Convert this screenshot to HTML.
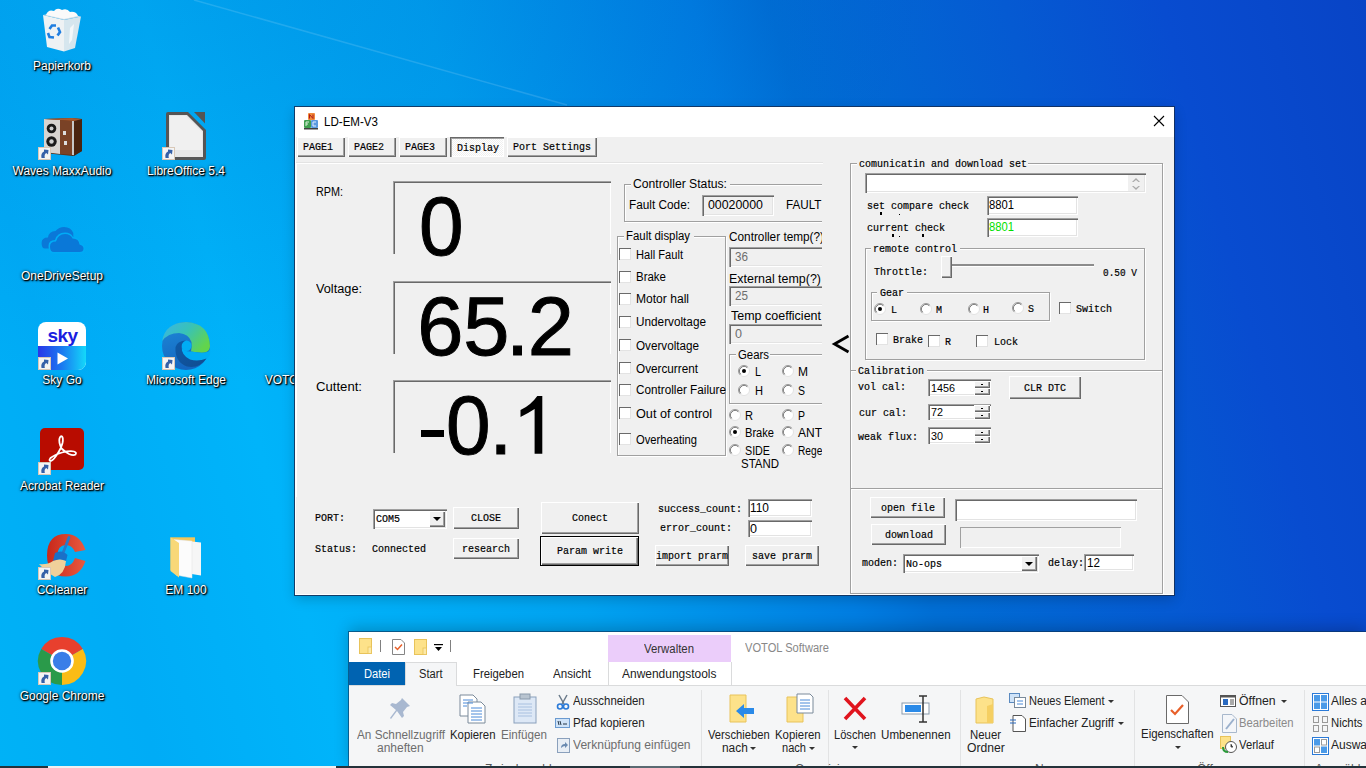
<!DOCTYPE html>
<html><head><meta charset="utf-8"><title>LD-EM-V3</title>
<style>
html,body{margin:0;padding:0;width:1366px;height:768px;overflow:hidden;background:#0a8ae0;}
.a{position:absolute;box-sizing:border-box;}
svg.a{overflow:visible;}
.t{position:absolute;white-space:pre;}
.dl{position:absolute;text-align:center;font-family:"Liberation Sans",sans-serif;font-size:12px;line-height:12px;color:#fff;text-shadow:1px 1px 1px #000,1px 1px 2px #000,0 0 3px rgba(0,0,0,0.7);white-space:pre;}
</style></head><body>
<div class="a" style="left:0px;top:0px;width:1366px;height:768px;background:radial-gradient(ellipse 750px 430px at 200px -40px, rgba(0,30,150,0.12), rgba(0,30,150,0)), linear-gradient(75deg, rgb(0,178,246) 0%, rgb(0,172,246) 10%, rgb(0,180,250) 22%, rgb(0,162,240) 40%, rgb(0,125,225) 57%, rgb(0,110,212) 62%, rgb(5,90,210) 77%, rgb(8,76,208) 87%, rgb(8,68,198) 100%);"></div>
<svg class="a" style="left:0;top:0" width="1366" height="768"><line x1="194" y1="0" x2="567" y2="105" stroke="rgba(255,255,255,0.13)" stroke-width="1.5"/></svg>
<svg class="a" style="left:40px;top:6px" width="44" height="48" viewBox="40 6 44 48"><path d="M43 15 L64 20 L64 51.5 L47 47Z" fill="#eef2f4"/><path d="M64 20 L81 16.5 L75 48 L64 51.5Z" fill="#d6e6ee"/><path d="M43 15 L64 20 L81 16.5 L60 12Z" fill="#c8dce8"/><path d="M46 15 Q48 9 54 11 Q57 7 62 10 Q67 8 70 12 Q76 11 78 16 L64 19Z" fill="#fafafa"/><path d="M70 28 L74 24 L72 40 L69 44Z" fill="#f4f8fa"/><path d="M49.5 29 L52 25.5 L56 25.5 M58 27.5 L60 32 L57.5 35.5 M54 37.5 L49.5 37 L48 33" fill="none" stroke="#1f7ee0" stroke-width="2.6"/></svg>
<div class="t dl" style="left:2px;width:120px;top:59.84px;">Papierkorb</div>
<svg class="a" style="left:43px;top:117px" width="40" height="40" viewBox="43 117 40 40"><path d="M44 119 L72 118 L82 119 L82 151 L73 156 L44 153Z" fill="#5a2e14"/><path d="M74 121 L82 119 L82 151 L74 156Z" fill="#4a2410"/><path d="M44 119 L60 120 L60 154 L44 152Z" fill="#d8d4d0"/><path d="M60 120 L72 121 L72 155 L60 154Z" fill="#7a4226"/><rect x="72" y="121" width="2" height="34" fill="#c8c8c8"/><circle cx="51.5" cy="128.5" r="4.8" fill="#1a1a1a"/><circle cx="51.5" cy="141.5" r="5.2" fill="#1a1a1a"/><circle cx="51.5" cy="128.5" r="2" fill="#cfcfcf"/><circle cx="51.5" cy="141.5" r="2.2" fill="#cfcfcf"/><rect x="63" y="131" width="3" height="4" fill="#ddd"/><rect x="64" y="141" width="3" height="4" fill="#ddd"/><path d="M44 119 L72 118 L82 119 L74 121 L60 120Z" fill="#a85a30"/></svg>
<svg class="a" style="left:38px;top:147px" width="13" height="13" viewBox="0 0 13 13"><rect x="0.5" y="0.5" width="12" height="12" fill="#f4f4f4" stroke="#d8c8b8"/><path d="M3.5 11 Q2.5 6 6 4.5 L6 2.5 L10.5 3 L10 7.5 L8.3 6 Q6 7 6.8 11Z" fill="#3560a8"/></svg>
<div class="t dl" style="left:2px;width:120px;top:164.84px;">Waves MaxxAudio</div>
<svg class="a" style="left:165px;top:111px" width="42" height="50" viewBox="165 111 42 50"><path d="M166 114 Q166 112 168 112 L188 112 L206 130 L206 158 Q206 160 204 160 L168 160 Q166 160 166 158Z" fill="#555"/><path d="M169 115 L187 115 L203 131 L203 157 L169 157Z" fill="#e6e6e6"/><path d="M170 116 L186 116 L202 132 L202 150 L170 150Z" fill="#f0f0f0"/><path d="M194 112 L205 112 L205 123.5Z" fill="#555"/></svg>
<svg class="a" style="left:162px;top:147px" width="13" height="13" viewBox="0 0 13 13"><rect x="0.5" y="0.5" width="12" height="12" fill="#f4f4f4" stroke="#d8c8b8"/><path d="M3.5 11 Q2.5 6 6 4.5 L6 2.5 L10.5 3 L10 7.5 L8.3 6 Q6 7 6.8 11Z" fill="#3560a8"/></svg>
<div class="t dl" style="left:126px;width:120px;top:164.84px;">LibreOffice 5.4</div>
<svg class="a" style="left:40px;top:225px" width="46" height="29" viewBox="40 225 46 29"><path d="M45 248.6 Q41.6 248.6 41.6 243 Q41.6 237.5 48 237.5 Q49 231 55.5 231 Q59 227 64 227 Q71 227 73.3 233 L73.3 248.6Z" fill="#0a78d8"/><path d="M53 253.5 Q48.5 253.5 48.5 246 Q48.5 240 55 240 Q57 232.5 65 232.5 Q71 232.5 73 237 Q79.5 237 80.5 243 Q85 244 85 248.5 Q85 253.5 80 253.5Z" fill="#00acf6"/><path d="M54 252 Q50 252 50 246.5 Q50 241.5 56 241.5 Q58 234 65 234 Q70.5 234 72.5 238.5 Q79 238.5 79.5 244.5 Q83.5 245.5 83.5 248.5 Q83.5 252 79.5 252Z" fill="#0a78d8"/></svg>
<div class="t dl" style="left:2px;width:120px;top:269.84px;">OneDriveSetup</div>
<svg class="a" style="left:38px;top:322px" width="48" height="48" viewBox="0 0 48 48"><defs><linearGradient id="sk" x1="0" x2="1" y1="0" y2="0"><stop offset="0" stop-color="#2a36e8"/><stop offset="0.5" stop-color="#1a7af0"/><stop offset="1" stop-color="#14d8fa"/></linearGradient><clipPath id="skc"><rect x="0" y="0" width="48" height="48" rx="8"/></clipPath></defs><g clip-path="url(#skc)"><rect width="48" height="48" fill="#fff"/><rect y="24" width="48" height="24" fill="url(#sk)"/></g><text x="24.5" y="19.5" text-anchor="middle" font-family="Liberation Sans" font-weight="700" font-size="19" letter-spacing="-0.5" fill="#1a1ee0">sky</text><path d="M19.5 30.5 L30 36.5 L19.5 42.5Z" fill="#fff"/></svg>
<svg class="a" style="left:38px;top:357px" width="13" height="13" viewBox="0 0 13 13"><rect x="0.5" y="0.5" width="12" height="12" fill="#f4f4f4" stroke="#d8c8b8"/><path d="M3.5 11 Q2.5 6 6 4.5 L6 2.5 L10.5 3 L10 7.5 L8.3 6 Q6 7 6.8 11Z" fill="#3560a8"/></svg>
<div class="t dl" style="left:2px;width:120px;top:373.84px;">Sky Go</div>
<svg class="a" style="left:162px;top:322px" width="48" height="48" viewBox="0 0 48 48"><defs><linearGradient id="eg" x1="0" x2="1" y1="0" y2="0.6"><stop offset="0" stop-color="#3ab4e8"/><stop offset="0.5" stop-color="#38c2b8"/><stop offset="1" stop-color="#62d44c"/></linearGradient><linearGradient id="el" x1="0" x2="0.3" y1="0" y2="1"><stop offset="0" stop-color="#1e8ad8"/><stop offset="1" stop-color="#1466c0"/></linearGradient><linearGradient id="eb" x1="0" x2="1" y1="0" y2="1"><stop offset="0" stop-color="#0e5aa8"/><stop offset="1" stop-color="#114c90"/></linearGradient></defs><circle cx="24" cy="24" r="24" fill="url(#el)"/><path d="M0.2 19 Q3 1 24 0 Q47 1 48 24 Q48 29 43 30.5 Q36 31 29 29.5 Q30 25 29.5 20 Q27 12 17 11 Q6 11 0.2 19Z" fill="url(#eg)"/><ellipse cx="24.5" cy="23.8" rx="5" ry="5.2" fill="#00adf5"/><path d="M20 26 Q23 30 29 29.5 Q37 31 43 30.5 Q47 30 48.2 27 L48.2 32 Q46.5 36 44.5 37 Q36 41 28 38 Q21 35 20 29Z" fill="#00adf5"/><path d="M13.5 25 Q12.5 40 25 44.5 Q37 47 44.5 36.5 Q36 40 28 37.5 Q19.5 33.5 19.5 25 Q19.5 20 24 18.5 Q15.5 18.5 13.5 25Z" fill="url(#eb)"/></svg>
<svg class="a" style="left:162px;top:357px" width="13" height="13" viewBox="0 0 13 13"><rect x="0.5" y="0.5" width="12" height="12" fill="#f4f4f4" stroke="#d8c8b8"/><path d="M3.5 11 Q2.5 6 6 4.5 L6 2.5 L10.5 3 L10 7.5 L8.3 6 Q6 7 6.8 11Z" fill="#3560a8"/></svg>
<div class="t dl" style="left:126px;width:120px;top:373.84px;">Microsoft Edge</div>
<div class="t dl" style="left:250px;width:120px;top:373.84px;">VOTOL Software</div>
<svg class="a" style="left:40px;top:428px" width="44" height="42" viewBox="40 428 44 42"><rect x="40" y="428" width="44" height="42" rx="5" fill="#b80c00"/><path d="M61.5 448.5 Q58.5 442 59.5 438.5 Q60.5 435.5 62 436.5 Q63.5 438 62.5 443 Q61 449 56 456 Q52.5 461 50.5 461 Q48.5 460.5 50.5 458 Q54 455 62 452.5 Q70 450.5 74 451.5 Q77 452.5 75.5 454.5 Q73.5 456 69 454 Q65 452 61.5 448.5Z" fill="none" stroke="#fff" stroke-width="1.8"/></svg>
<svg class="a" style="left:38px;top:462px" width="13" height="13" viewBox="0 0 13 13"><rect x="0.5" y="0.5" width="12" height="12" fill="#f4f4f4" stroke="#d8c8b8"/><path d="M3.5 11 Q2.5 6 6 4.5 L6 2.5 L10.5 3 L10 7.5 L8.3 6 Q6 7 6.8 11Z" fill="#3560a8"/></svg>
<div class="t dl" style="left:2px;width:120px;top:479.84px;">Acrobat Reader</div>
<svg class="a" style="left:38px;top:533px" width="49" height="45" viewBox="38 533 49 45"><defs><linearGradient id="cc" x1="0" x2="1"><stop offset="0" stop-color="#c8281a"/><stop offset="1" stop-color="#e85a40"/></linearGradient></defs><path d="M85.5 550 Q80 534 66 534 Q47 534 47 555.5 Q47 576.5 66 576.5 Q80 576.5 85.5 561 L75 558 Q72 566 66 566 Q57.5 566 57.5 555.5 Q57.5 545 66 545 Q72 545 75 552Z" fill="url(#cc)"/><path d="M69 537.5 L63 553" stroke="#2a78c8" stroke-width="2.8" stroke-linecap="round"/><path d="M55 553 Q62 549 67.5 555 L66 561 Q60 558 53 561Z" fill="#1a70c8"/><path d="M53 561 Q60 558 66 561 Q65 574 55 577 Q46 572 39 564 Q47 565 53 561Z" fill="#f0d09a"/></svg>
<svg class="a" style="left:38px;top:567px" width="13" height="13" viewBox="0 0 13 13"><rect x="0.5" y="0.5" width="12" height="12" fill="#f4f4f4" stroke="#d8c8b8"/><path d="M3.5 11 Q2.5 6 6 4.5 L6 2.5 L10.5 3 L10 7.5 L8.3 6 Q6 7 6.8 11Z" fill="#3560a8"/></svg>
<div class="t dl" style="left:2px;width:120px;top:583.84px;">CCleaner</div>
<svg class="a" style="left:169px;top:536px" width="34" height="44" viewBox="169 536 34 44"><path d="M170.5 537.3 L195 537.3 L195 570 L170.5 570Z" fill="#f2c65a"/><path d="M178 540 L201 542.5 L201 575.5 L179 572Z" fill="#f6f6f6"/><path d="M174 539.5 L192 541 L192 578 L176 575Z" fill="#fcfcfc" stroke="#e0e0e0" stroke-width="0.5"/><path d="M170.5 537.3 L179 543 L179 577.6 L170.5 571Z" fill="#f8d878"/></svg>
<div class="t dl" style="left:126px;width:120px;top:583.84px;">EM 100</div>
<svg class="a" style="left:38px;top:637px" width="48" height="48" viewBox="-24 -24 48 48"><path d="M0 0 L-20.8 -12 A24 24 0 0 1 20.8 -12Z" fill="#e8402e"/><path d="M0 0 L20.8 -12 A24 24 0 0 1 0 24Z" fill="#fbbc16"/><path d="M0 0 L0 24 A24 24 0 0 1 -20.8 -12Z" fill="#2a9a4a"/><circle r="11.8" fill="#fff"/><circle r="9.2" fill="#3a7ee8"/></svg>
<svg class="a" style="left:38px;top:672px" width="13" height="13" viewBox="0 0 13 13"><rect x="0.5" y="0.5" width="12" height="12" fill="#f4f4f4" stroke="#d8c8b8"/><path d="M3.5 11 Q2.5 6 6 4.5 L6 2.5 L10.5 3 L10 7.5 L8.3 6 Q6 7 6.8 11Z" fill="#3560a8"/></svg>
<div class="t dl" style="left:2px;width:120px;top:689.84px;">Google Chrome</div>
<div class="a" style="left:295px;top:107px;width:879px;height:488px;background:#f0f0f0;border:0;box-shadow:0 0 0 1px rgba(20,45,85,0.85), 0 4px 12px rgba(0,0,0,0.2);"></div>
<div class="a" style="left:295px;top:107px;width:879px;height:30px;background:#fff;"></div>
<div class="a" style="left:295px;top:137px;width:1px;height:458px;background:#fff;"></div>
<div class="a" style="left:295px;top:594px;width:879px;height:1px;background:#fff;"></div>
<svg class="a" style="left:302px;top:112px" width="18" height="18" viewBox="0 0 18 18"><rect x="6" y="1" width="7" height="7" rx="1" fill="#f08a3a"/><path d="M7.5 6.5 V2.5 L11 6.5 V2.5" stroke="#b01818" stroke-width="1" fill="none"/><rect x="2" y="8" width="7" height="8" rx="1" fill="#40a050"/><rect x="9" y="8" width="7" height="8" rx="1" fill="#5a9ae0"/><path d="M4 14 V10 H7 M4 12 H6" stroke="#d8f0d8" stroke-width="1" fill="none"/><path d="M14 10 H11 V14 H14" stroke="#e0ecff" stroke-width="1" fill="none"/><rect x="2" y="16" width="14" height="1.5" fill="#404040"/></svg>
<div class="t" style="left:324px;top:115.84px;font-size:12px;line-height:12px;font-family:'Liberation Sans', sans-serif;color:#000;transform:scaleX(0.9640);transform-origin:0 0;">LD-EM-V3</div>
<svg class="a" style="left:1153px;top:115px" width="12" height="12"><path d="M1 1 L11 11 M11 1 L1 11" stroke="#000" stroke-width="1.1"/></svg>
<div class="a" style="left:297px;top:137px;width:48px;height:20px;background:#f0f0f0;box-shadow:inset 1px 1px #fff,inset -1px -1px #696969,inset -2px -2px #a0a0a0;"></div>
<div class="t" style="left:302.5px;top:141.57px;font-size:11px;line-height:11px;font-family:'Liberation Mono', monospace;color:#000;transform:scaleX(0.9087);transform-origin:0 0;-webkit-text-stroke:0.2px #000;">PAGE1</div>
<div class="a" style="left:348px;top:137px;width:48px;height:20px;background:#f0f0f0;box-shadow:inset 1px 1px #fff,inset -1px -1px #696969,inset -2px -2px #a0a0a0;"></div>
<div class="t" style="left:353.5px;top:141.57px;font-size:11px;line-height:11px;font-family:'Liberation Mono', monospace;color:#000;transform:scaleX(0.9087);transform-origin:0 0;-webkit-text-stroke:0.2px #000;">PAGE2</div>
<div class="a" style="left:399px;top:137px;width:48px;height:20px;background:#f0f0f0;box-shadow:inset 1px 1px #fff,inset -1px -1px #696969,inset -2px -2px #a0a0a0;"></div>
<div class="t" style="left:404.5px;top:141.57px;font-size:11px;line-height:11px;font-family:'Liberation Mono', monospace;color:#000;transform:scaleX(0.9087);transform-origin:0 0;-webkit-text-stroke:0.2px #000;">PAGE3</div>
<div class="a" style="left:450px;top:137px;width:54px;height:20px;background:repeating-conic-gradient(#f0f0f0 0 25%,#fff 0 50%) 0 0/2px 2px;box-shadow:inset 1px 1px #696969,inset 2px 2px #a0a0a0,inset -1px -1px #fff;"></div>
<div class="t" style="left:457.3px;top:142.57px;font-size:11px;line-height:11px;font-family:'Liberation Mono', monospace;color:#000;transform:scaleX(0.9087);transform-origin:0 0;-webkit-text-stroke:0.2px #000;">Display</div>
<div class="a" style="left:507px;top:137px;width:90px;height:20px;background:#f0f0f0;box-shadow:inset 1px 1px #fff,inset -1px -1px #696969,inset -2px -2px #a0a0a0;"></div>
<div class="t" style="left:512.6px;top:141.57px;font-size:11px;line-height:11px;font-family:'Liberation Mono', monospace;color:#000;transform:scaleX(0.9088);transform-origin:0 0;-webkit-text-stroke:0.2px #000;">Port Settings</div>
<div class="a" style="left:296px;top:162px;width:527px;height:1px;background:#e3e3e3;"></div>
<div class="a" style="left:296px;top:163px;width:527px;height:1px;background:#fff;"></div>
<div class="a" style="left:296px;top:163px;width:1px;height:334px;background:#fff;"></div>
<div class="t" style="left:316px;top:185.84px;font-size:12px;line-height:12px;font-family:'Liberation Sans', sans-serif;color:#000;transform:scaleX(0.9000);transform-origin:0 0;">RPM:</div>
<div class="t" style="left:316px;top:282.84px;font-size:12px;line-height:12px;font-family:'Liberation Sans', sans-serif;color:#000;transform:scaleX(1.0605);transform-origin:0 0;">Voltage:</div>
<div class="t" style="left:316px;top:380.84px;font-size:12px;line-height:12px;font-family:'Liberation Sans', sans-serif;color:#000;transform:scaleX(1.0944);transform-origin:0 0;">Cuttent:</div>
<div class="a" style="left:393px;top:181px;width:218px;height:73px;box-shadow:inset 1px 1px #a0a0a0,inset 2px 2px #696969,inset -1px 0 #fff;"></div>
<div class="a" style="left:393px;top:281px;width:218px;height:73px;box-shadow:inset 1px 1px #a0a0a0,inset 2px 2px #696969,inset -1px 0 #fff;"></div>
<div class="a" style="left:393px;top:380px;width:218px;height:73px;box-shadow:inset 1px 1px #a0a0a0,inset 2px 2px #696969,inset -1px 0 #fff;"></div>
<div class="t" style="left:419.2px;top:184.72px;font-size:83px;line-height:83px;font-family:'Liberation Sans', sans-serif;color:#000;transform:scaleX(0.965);transform-origin:0 0;-webkit-text-stroke:1px #000;">0</div>
<div class="t" style="left:417.3px;top:284.72px;font-size:83px;line-height:83px;font-family:'Liberation Sans', sans-serif;color:#000;-webkit-text-stroke:1px #000;">6</div>
<div class="t" style="left:463.2px;top:284.72px;font-size:83px;line-height:83px;font-family:'Liberation Sans', sans-serif;color:#000;-webkit-text-stroke:1px #000;">5</div>
<div class="t" style="left:505.9px;top:284.72px;font-size:83px;line-height:83px;font-family:'Liberation Sans', sans-serif;color:#000;-webkit-text-stroke:1px #000;">.</div>
<div class="t" style="left:527.8px;top:284.72px;font-size:83px;line-height:83px;font-family:'Liberation Sans', sans-serif;color:#000;-webkit-text-stroke:1px #000;">2</div>
<div class="a" style="left:421px;top:430px;width:23px;height:7px;background:#000;"></div>
<div class="t" style="left:446.1px;top:383.52px;font-size:83px;line-height:83px;font-family:'Liberation Sans', sans-serif;color:#000;transform:scaleX(0.965);transform-origin:0 0;-webkit-text-stroke:1px #000;">0</div>
<div class="t" style="left:489.2px;top:383.52px;font-size:83px;line-height:83px;font-family:'Liberation Sans', sans-serif;color:#000;-webkit-text-stroke:1px #000;">.</div>
<svg class="a" style="left:0;top:0" width="600" height="460"><path d="M534.6 453.8 V409.1 Q528 413.5 520.5 416.9 V410 Q531 405 537.3 395.9 H542.3 V453.8 Z" fill="#000"/></svg>
<div class="a" style="left:0;top:0;width:822px;height:768px;overflow:hidden">
<div class="a" style="left:624px;top:184px;width:277px;height:38px;border:1px solid #a0a0a0;box-shadow:inset 1px 1px #fff,1px 1px #fff;"></div>
<div class="a" style="left:631px;top:183px;width:99px;height:3px;background:#f0f0f0"></div>
<div class="a" style="left:617px;top:236px;width:109px;height:220px;border:1px solid #a0a0a0;box-shadow:inset 1px 1px #fff,1px 1px #fff;"></div>
<div class="a" style="left:624px;top:235px;width:70px;height:3px;background:#f0f0f0"></div>
<div class="a" style="left:729px;top:354px;width:172px;height:50px;border:1px solid #a0a0a0;box-shadow:inset 1px 1px #fff,1px 1px #fff;"></div>
<div class="a" style="left:736px;top:353px;width:34px;height:3px;background:#f0f0f0"></div>
</div>
<div class="a" style="left:0;top:0;width:822px;height:768px;overflow:hidden">
<div class="t" style="left:633px;top:177.84px;font-size:12px;line-height:12px;font-family:'Liberation Sans', sans-serif;color:#000;transform:scaleX(1.0138);transform-origin:0 0;">Controller Status:</div>
<div class="t" style="left:629px;top:198.84px;font-size:12px;line-height:12px;font-family:'Liberation Sans', sans-serif;color:#000;transform:scaleX(0.9831);transform-origin:0 0;">Fault Code:</div>
<div class="a" style="left:702px;top:195px;width:72px;height:21px;box-shadow:inset 1px 1px #a0a0a0,inset 2px 2px #696969,inset -1px -1px #fff,inset -2px -2px #e3e3e3;"></div>
<div class="t" style="left:708px;top:198.84px;font-size:12px;line-height:12px;font-family:'Liberation Sans', sans-serif;color:#000;transform:scaleX(1.0301);transform-origin:0 0;">00020000</div>
<div class="t" style="left:786px;top:198.84px;font-size:12px;line-height:12px;font-family:'Liberation Sans', sans-serif;color:#000;transform:scaleX(0.9739);transform-origin:0 0;">FAULT</div>
<div class="t" style="left:626px;top:229.84px;font-size:12px;line-height:12px;font-family:'Liberation Sans', sans-serif;color:#000;transform:scaleX(0.9499);transform-origin:0 0;">Fault display</div>
<div class="a" style="left:619px;top:248px;width:12px;height:12px;background:#fff;box-shadow:inset 1px 1px #6a6a6a,inset -1px -1px #e3e3e3;"></div>
<div class="t" style="left:636px;top:248.84px;font-size:12px;line-height:12px;font-family:'Liberation Sans', sans-serif;color:#000;transform:scaleX(0.9273);transform-origin:0 0;">Hall Fault</div>
<div class="a" style="left:619px;top:271px;width:12px;height:12px;background:#fff;box-shadow:inset 1px 1px #6a6a6a,inset -1px -1px #e3e3e3;"></div>
<div class="t" style="left:636px;top:271.34px;font-size:12px;line-height:12px;font-family:'Liberation Sans', sans-serif;color:#000;transform:scaleX(0.9567);transform-origin:0 0;">Brake</div>
<div class="a" style="left:619px;top:293px;width:12px;height:12px;background:#fff;box-shadow:inset 1px 1px #6a6a6a,inset -1px -1px #e3e3e3;"></div>
<div class="t" style="left:636px;top:293.34px;font-size:12px;line-height:12px;font-family:'Liberation Sans', sans-serif;color:#000;transform:scaleX(1.0059);transform-origin:0 0;">Motor hall</div>
<div class="a" style="left:619px;top:316px;width:12px;height:12px;background:#fff;box-shadow:inset 1px 1px #6a6a6a,inset -1px -1px #e3e3e3;"></div>
<div class="t" style="left:636px;top:316.34px;font-size:12px;line-height:12px;font-family:'Liberation Sans', sans-serif;color:#000;transform:scaleX(0.9805);transform-origin:0 0;">Undervoltage</div>
<div class="a" style="left:619px;top:339px;width:12px;height:12px;background:#fff;box-shadow:inset 1px 1px #6a6a6a,inset -1px -1px #e3e3e3;"></div>
<div class="t" style="left:636px;top:339.84px;font-size:12px;line-height:12px;font-family:'Liberation Sans', sans-serif;color:#000;transform:scaleX(0.9737);transform-origin:0 0;">Overvoltage</div>
<div class="a" style="left:619px;top:362px;width:12px;height:12px;background:#fff;box-shadow:inset 1px 1px #6a6a6a,inset -1px -1px #e3e3e3;"></div>
<div class="t" style="left:636px;top:362.84px;font-size:12px;line-height:12px;font-family:'Liberation Sans', sans-serif;color:#000;transform:scaleX(0.9785);transform-origin:0 0;">Overcurrent</div>
<div class="a" style="left:619px;top:384px;width:12px;height:12px;background:#fff;box-shadow:inset 1px 1px #6a6a6a,inset -1px -1px #e3e3e3;"></div>
<div class="t" style="left:636px;top:384.34px;font-size:12px;line-height:12px;font-family:'Liberation Sans', sans-serif;color:#000;transform:scaleX(0.9778);transform-origin:0 0;">Controller Failure</div>
<div class="a" style="left:619px;top:407px;width:12px;height:12px;background:#fff;box-shadow:inset 1px 1px #6a6a6a,inset -1px -1px #e3e3e3;"></div>
<div class="t" style="left:636px;top:407.84px;font-size:12px;line-height:12px;font-family:'Liberation Sans', sans-serif;color:#000;transform:scaleX(1.0549);transform-origin:0 0;">Out of control</div>
<div class="a" style="left:619px;top:433px;width:12px;height:12px;background:#fff;box-shadow:inset 1px 1px #6a6a6a,inset -1px -1px #e3e3e3;"></div>
<div class="t" style="left:636px;top:433.84px;font-size:12px;line-height:12px;font-family:'Liberation Sans', sans-serif;color:#000;transform:scaleX(0.9331);transform-origin:0 0;">Overheating</div>
<div class="t" style="left:729px;top:230.84px;font-size:12px;line-height:12px;font-family:'Liberation Sans', sans-serif;color:#000;transform:scaleX(0.9824);transform-origin:0 0;">Controller temp(?)</div>
<div class="a" style="left:729px;top:247px;width:120px;height:20px;background:#f0f0f0;box-shadow:inset 1px 1px #a0a0a0,inset 2px 2px #696969,inset -1px -1px #fff,inset -2px -2px #e3e3e3;"></div>
<div class="t" style="left:735px;top:250.84px;font-size:12px;line-height:12px;font-family:'Liberation Sans', sans-serif;color:#6d6d6d;transform:scaleX(0.9731);transform-origin:0 0;">36</div>
<div class="t" style="left:729px;top:272.84px;font-size:12px;line-height:12px;font-family:'Liberation Sans', sans-serif;color:#000;transform:scaleX(1.0372);transform-origin:0 0;">External temp(?)</div>
<div class="a" style="left:729px;top:286px;width:120px;height:20px;background:#f0f0f0;box-shadow:inset 1px 1px #a0a0a0,inset 2px 2px #696969,inset -1px -1px #fff,inset -2px -2px #e3e3e3;"></div>
<div class="t" style="left:735px;top:289.84px;font-size:12px;line-height:12px;font-family:'Liberation Sans', sans-serif;color:#6d6d6d;transform:scaleX(0.9731);transform-origin:0 0;">25</div>
<div class="t" style="left:731px;top:309.84px;font-size:12px;line-height:12px;font-family:'Liberation Sans', sans-serif;color:#000;transform:scaleX(1.0405);transform-origin:0 0;">Temp coefficient</div>
<div class="a" style="left:729px;top:324px;width:120px;height:20px;background:#f0f0f0;box-shadow:inset 1px 1px #a0a0a0,inset 2px 2px #696969,inset -1px -1px #fff,inset -2px -2px #e3e3e3;"></div>
<div class="t" style="left:735px;top:327.84px;font-size:12px;line-height:12px;font-family:'Liberation Sans', sans-serif;color:#6d6d6d;transform:scaleX(1.0467);transform-origin:0 0;">0</div>
<div class="t" style="left:738px;top:348.84px;font-size:12px;line-height:12px;font-family:'Liberation Sans', sans-serif;color:#000;transform:scaleX(0.9484);transform-origin:0 0;">Gears</div>
<svg class="a" style="left:738px;top:365px" width="12" height="12" viewBox="0 0 12 12"><circle cx="6" cy="6" r="5.5" fill="#fff" stroke="#e0e0e0" stroke-width="0.9"/><path d="M2.1 9.9 A5.5 5.5 0 0 1 9.9 2.1" fill="none" stroke="#9a9a9a" stroke-width="0.9"/><path d="M2.75 9.25 A4.6 4.6 0 0 1 9.25 2.75" fill="none" stroke="#6a6a6a" stroke-width="0.9"/><circle cx="6" cy="6" r="2" fill="#000"/></svg>
<div class="t" style="left:755px;top:365.84px;font-size:12px;line-height:12px;font-family:'Liberation Sans', sans-serif;color:#000;transform:scaleX(0.8972);transform-origin:0 0;">L</div>
<svg class="a" style="left:782px;top:365px" width="12" height="12" viewBox="0 0 12 12"><circle cx="6" cy="6" r="5.5" fill="#fff" stroke="#e0e0e0" stroke-width="0.9"/><path d="M2.1 9.9 A5.5 5.5 0 0 1 9.9 2.1" fill="none" stroke="#9a9a9a" stroke-width="0.9"/><path d="M2.75 9.25 A4.6 4.6 0 0 1 9.25 2.75" fill="none" stroke="#6a6a6a" stroke-width="0.9"/></svg>
<div class="t" style="left:798px;top:365.84px;font-size:12px;line-height:12px;font-family:'Liberation Sans', sans-serif;color:#000;transform:scaleX(1.0000);transform-origin:0 0;">M</div>
<svg class="a" style="left:738px;top:384px" width="12" height="12" viewBox="0 0 12 12"><circle cx="6" cy="6" r="5.5" fill="#fff" stroke="#e0e0e0" stroke-width="0.9"/><path d="M2.1 9.9 A5.5 5.5 0 0 1 9.9 2.1" fill="none" stroke="#9a9a9a" stroke-width="0.9"/><path d="M2.75 9.25 A4.6 4.6 0 0 1 9.25 2.75" fill="none" stroke="#6a6a6a" stroke-width="0.9"/></svg>
<div class="t" style="left:755px;top:384.84px;font-size:12px;line-height:12px;font-family:'Liberation Sans', sans-serif;color:#000;transform:scaleX(0.9225);transform-origin:0 0;">H</div>
<svg class="a" style="left:782px;top:384px" width="12" height="12" viewBox="0 0 12 12"><circle cx="6" cy="6" r="5.5" fill="#fff" stroke="#e0e0e0" stroke-width="0.9"/><path d="M2.1 9.9 A5.5 5.5 0 0 1 9.9 2.1" fill="none" stroke="#9a9a9a" stroke-width="0.9"/><path d="M2.75 9.25 A4.6 4.6 0 0 1 9.25 2.75" fill="none" stroke="#6a6a6a" stroke-width="0.9"/></svg>
<div class="t" style="left:798px;top:384.84px;font-size:12px;line-height:12px;font-family:'Liberation Sans', sans-serif;color:#000;transform:scaleX(0.8733);transform-origin:0 0;">S</div>
<svg class="a" style="left:729px;top:409px" width="12" height="12" viewBox="0 0 12 12"><circle cx="6" cy="6" r="5.5" fill="#fff" stroke="#e0e0e0" stroke-width="0.9"/><path d="M2.1 9.9 A5.5 5.5 0 0 1 9.9 2.1" fill="none" stroke="#9a9a9a" stroke-width="0.9"/><path d="M2.75 9.25 A4.6 4.6 0 0 1 9.25 2.75" fill="none" stroke="#6a6a6a" stroke-width="0.9"/></svg>
<div class="t" style="left:745px;top:409.84px;font-size:12px;line-height:12px;font-family:'Liberation Sans', sans-serif;color:#000;transform:scaleX(0.9225);transform-origin:0 0;">R</div>
<svg class="a" style="left:782px;top:409px" width="12" height="12" viewBox="0 0 12 12"><circle cx="6" cy="6" r="5.5" fill="#fff" stroke="#e0e0e0" stroke-width="0.9"/><path d="M2.1 9.9 A5.5 5.5 0 0 1 9.9 2.1" fill="none" stroke="#9a9a9a" stroke-width="0.9"/><path d="M2.75 9.25 A4.6 4.6 0 0 1 9.25 2.75" fill="none" stroke="#6a6a6a" stroke-width="0.9"/></svg>
<div class="t" style="left:798px;top:409.84px;font-size:12px;line-height:12px;font-family:'Liberation Sans', sans-serif;color:#000;transform:scaleX(0.8733);transform-origin:0 0;">P</div>
<svg class="a" style="left:729px;top:426px" width="12" height="12" viewBox="0 0 12 12"><circle cx="6" cy="6" r="5.5" fill="#fff" stroke="#e0e0e0" stroke-width="0.9"/><path d="M2.1 9.9 A5.5 5.5 0 0 1 9.9 2.1" fill="none" stroke="#9a9a9a" stroke-width="0.9"/><path d="M2.75 9.25 A4.6 4.6 0 0 1 9.25 2.75" fill="none" stroke="#6a6a6a" stroke-width="0.9"/><circle cx="6" cy="6" r="2" fill="#000"/></svg>
<div class="t" style="left:745px;top:426.84px;font-size:12px;line-height:12px;font-family:'Liberation Sans', sans-serif;color:#000;transform:scaleX(0.9248);transform-origin:0 0;">Brake</div>
<svg class="a" style="left:782px;top:426px" width="12" height="12" viewBox="0 0 12 12"><circle cx="6" cy="6" r="5.5" fill="#fff" stroke="#e0e0e0" stroke-width="0.9"/><path d="M2.1 9.9 A5.5 5.5 0 0 1 9.9 2.1" fill="none" stroke="#9a9a9a" stroke-width="0.9"/><path d="M2.75 9.25 A4.6 4.6 0 0 1 9.25 2.75" fill="none" stroke="#6a6a6a" stroke-width="0.9"/></svg>
<div class="t" style="left:798px;top:426.84px;font-size:12px;line-height:12px;font-family:'Liberation Sans', sans-serif;color:#000;transform:scaleX(1.0000);transform-origin:0 0;">ANT</div>
<svg class="a" style="left:729px;top:444px" width="12" height="12" viewBox="0 0 12 12"><circle cx="6" cy="6" r="5.5" fill="#fff" stroke="#e0e0e0" stroke-width="0.9"/><path d="M2.1 9.9 A5.5 5.5 0 0 1 9.9 2.1" fill="none" stroke="#9a9a9a" stroke-width="0.9"/><path d="M2.75 9.25 A4.6 4.6 0 0 1 9.25 2.75" fill="none" stroke="#6a6a6a" stroke-width="0.9"/></svg>
<div class="t" style="left:745px;top:444.84px;font-size:12px;line-height:12px;font-family:'Liberation Sans', sans-serif;color:#000;transform:scaleX(0.8924);transform-origin:0 0;">SIDE</div>
<svg class="a" style="left:782px;top:444px" width="12" height="12" viewBox="0 0 12 12"><circle cx="6" cy="6" r="5.5" fill="#fff" stroke="#e0e0e0" stroke-width="0.9"/><path d="M2.1 9.9 A5.5 5.5 0 0 1 9.9 2.1" fill="none" stroke="#9a9a9a" stroke-width="0.9"/><path d="M2.75 9.25 A4.6 4.6 0 0 1 9.25 2.75" fill="none" stroke="#6a6a6a" stroke-width="0.9"/></svg>
<div class="t" style="left:798px;top:444.84px;font-size:12px;line-height:12px;font-family:'Liberation Sans', sans-serif;color:#000;transform:scaleX(0.8481);transform-origin:0 0;">Regen</div>
<div class="t" style="left:741px;top:457.84px;font-size:12px;line-height:12px;font-family:'Liberation Sans', sans-serif;color:#000;transform:scaleX(0.9552);transform-origin:0 0;">STAND</div>
</div>
<svg class="a" style="left:832px;top:334px" width="18" height="20"><path d="M16.5 2 L2.5 10 L16.5 18" fill="none" stroke="#000" stroke-width="2.8"/></svg>
<div class="t" style="left:315px;top:512.57px;font-size:11px;line-height:11px;font-family:'Liberation Mono', monospace;color:#000;transform:scaleX(0.9087);transform-origin:0 0;-webkit-text-stroke:0.2px #000;">PORT:</div>
<div class="a" style="left:373px;top:509px;width:74px;height:20px;background:#fff;box-shadow:inset 1px 1px #a0a0a0,inset 2px 2px #696969,inset -1px -1px #fff,inset -2px -2px #e3e3e3;"></div>
<div class="t" style="left:376px;top:513.57px;font-size:11px;line-height:11px;font-family:'Liberation Mono', monospace;color:#000;transform:scaleX(0.9089);transform-origin:0 0;-webkit-text-stroke:0.2px #000;">COM5</div>
<div class="a" style="left:429px;top:511px;width:16px;height:16px;background:#f0f0f0;box-shadow:inset 1px 1px #fff,inset -1px -1px #696969,inset -2px -2px #a0a0a0;"></div>
<svg class="a" style="left:432px;top:516px" width="10" height="6"><path d="M1 1 L9 1 L5 5Z" fill="#000"/></svg>
<div class="a" style="left:453px;top:507px;width:66px;height:22px;background:#f0f0f0;box-shadow:inset 1px 1px #fff,inset -1px -1px #696969,inset -2px -2px #a0a0a0;"></div>
<div class="t" style="left:471.0px;top:512.57px;font-size:11px;line-height:11px;font-family:'Liberation Mono', monospace;color:#000;transform:scaleX(0.9087);transform-origin:0 0;-webkit-text-stroke:0.2px #000;">CLOSE</div>
<div class="t" style="left:315px;top:543.57px;font-size:11px;line-height:11px;font-family:'Liberation Mono', monospace;color:#000;transform:scaleX(0.9087);transform-origin:0 0;-webkit-text-stroke:0.2px #000;">Status:</div>
<div class="t" style="left:372px;top:543.57px;font-size:11px;line-height:11px;font-family:'Liberation Mono', monospace;color:#000;transform:scaleX(0.9088);transform-origin:0 0;-webkit-text-stroke:0.2px #000;">Connected</div>
<div class="a" style="left:453px;top:538px;width:66px;height:21px;background:#f0f0f0;box-shadow:inset 1px 1px #fff,inset -1px -1px #696969,inset -2px -2px #a0a0a0;"></div>
<div class="t" style="left:462.0px;top:543.57px;font-size:11px;line-height:11px;font-family:'Liberation Mono', monospace;color:#000;transform:scaleX(0.9089);transform-origin:0 0;-webkit-text-stroke:0.2px #000;">research</div>
<div class="a" style="left:541px;top:502px;width:98px;height:32px;background:#f0f0f0;box-shadow:inset 1px 1px #fff,inset -1px -1px #696969,inset -2px -2px #a0a0a0;"></div>
<div class="t" style="left:572.0px;top:512.57px;font-size:11px;line-height:11px;font-family:'Liberation Mono', monospace;color:#000;transform:scaleX(0.9089);transform-origin:0 0;-webkit-text-stroke:0.2px #000;">Conect</div>
<div class="a" style="left:540px;top:536px;width:99px;height:30px;background:#f0f0f0;box-shadow:inset 0 0 0 1px #000,inset 2px 2px #fff,inset -2px -2px #696969,inset -3px -3px #a0a0a0;"></div>
<div class="t" style="left:556.5px;top:545.57px;font-size:11px;line-height:11px;font-family:'Liberation Mono', monospace;color:#000;transform:scaleX(0.9088);transform-origin:0 0;-webkit-text-stroke:0.2px #000;">Param write</div>
<div class="t" style="left:658px;top:503.57px;font-size:11px;line-height:11px;font-family:'Liberation Mono', monospace;color:#000;transform:scaleX(0.9089);transform-origin:0 0;-webkit-text-stroke:0.2px #000;">success_count:</div>
<div class="a" style="left:748px;top:499px;width:64px;height:18px;background:#fff;box-shadow:inset 1px 1px #a0a0a0,inset 2px 2px #696969,inset -1px -1px #fff,inset -2px -2px #e3e3e3;"></div>
<div class="t" style="left:750px;top:501.84px;font-size:12px;line-height:12px;font-family:'Liberation Sans', sans-serif;color:#000;transform:scaleX(0.9927);transform-origin:0 0;">110</div>
<div class="t" style="left:660px;top:522.57px;font-size:11px;line-height:11px;font-family:'Liberation Mono', monospace;color:#000;transform:scaleX(0.9089);transform-origin:0 0;-webkit-text-stroke:0.2px #000;">error_count:</div>
<div class="a" style="left:748px;top:520px;width:64px;height:17px;background:#fff;box-shadow:inset 1px 1px #a0a0a0,inset 2px 2px #696969,inset -1px -1px #fff,inset -2px -2px #e3e3e3;"></div>
<div class="t" style="left:750px;top:522.84px;font-size:12px;line-height:12px;font-family:'Liberation Sans', sans-serif;color:#000;transform:scaleX(1.0467);transform-origin:0 0;">0</div>
<div class="a" style="left:655px;top:545px;width:74px;height:21px;background:#f0f0f0;box-shadow:inset 1px 1px #fff,inset -1px -1px #696969,inset -2px -2px #a0a0a0;"></div>
<div class="t" style="left:656.0px;top:550.57px;font-size:11px;line-height:11px;font-family:'Liberation Mono', monospace;color:#000;transform:scaleX(0.9089);transform-origin:0 0;-webkit-text-stroke:0.2px #000;">import prarm</div>
<div class="a" style="left:745px;top:545px;width:74px;height:21px;background:#f0f0f0;box-shadow:inset 1px 1px #fff,inset -1px -1px #696969,inset -2px -2px #a0a0a0;"></div>
<div class="t" style="left:752.0px;top:550.57px;font-size:11px;line-height:11px;font-family:'Liberation Mono', monospace;color:#000;transform:scaleX(0.9089);transform-origin:0 0;-webkit-text-stroke:0.2px #000;">save prarm</div>
<div class="a" style="left:850px;top:163px;width:313px;height:326px;border:1px solid #a0a0a0;box-shadow:inset 1px 1px #fff,1px 1px #fff;"></div>
<div class="a" style="left:857px;top:162px;width:171px;height:3px;background:#f0f0f0"></div>
<div class="t" style="left:859px;top:158.57px;font-size:11px;line-height:11px;font-family:'Liberation Mono', monospace;color:#000;transform:scaleX(0.9089);transform-origin:0 0;-webkit-text-stroke:0.2px #000;">comunicatin and download set</div>
<div class="a" style="left:865px;top:173px;width:281px;height:20px;background:#fff;box-shadow:inset 1px 1px #a0a0a0,inset 2px 2px #696969,inset -1px -1px #fff,inset -2px -2px #e3e3e3;"></div>
<div class="a" style="left:1128px;top:175px;width:16px;height:16px;background:#f0f0f0;"></div>
<svg class="a" style="left:1128px;top:175px" width="16" height="16"><path d="M4 7 L8 3 L12 7 L10.5 7 L8 5 L5.5 7Z M4 11 L8 15 L12 11 L10.5 11 L8 13 L5.5 11Z" fill="#a8a8a8"/></svg>
<div class="t" style="left:867px;top:200.57px;font-size:11px;line-height:11px;font-family:'Liberation Mono', monospace;color:#000;transform:scaleX(0.9089);transform-origin:0 0;-webkit-text-stroke:0.2px #000;">set compare check</div>
<div class="a" style="left:880px;top:212px;width:2px;height:3px;background:#000;"></div>
<div class="a" style="left:899px;top:214px;width:1px;height:1px;background:#000;"></div>
<div class="a" style="left:892px;top:234px;width:2px;height:3px;background:#000;"></div>
<div class="a" style="left:899px;top:236px;width:1px;height:1px;background:#000;"></div>
<div class="a" style="left:922px;top:234px;width:2px;height:3px;background:#000;"></div>
<div class="a" style="left:987px;top:196px;width:91px;height:19px;background:#fff;box-shadow:inset 1px 1px #a0a0a0,inset 2px 2px #696969,inset -1px -1px #fff,inset -2px -2px #e3e3e3;"></div>
<div class="t" style="left:989px;top:198.84px;font-size:12px;line-height:12px;font-family:'Liberation Sans', sans-serif;color:#000;transform:scaleX(0.9362);transform-origin:0 0;">8801</div>
<div class="t" style="left:867px;top:222.57px;font-size:11px;line-height:11px;font-family:'Liberation Mono', monospace;color:#000;transform:scaleX(0.9088);transform-origin:0 0;-webkit-text-stroke:0.2px #000;">current check</div>
<div class="a" style="left:987px;top:218px;width:91px;height:19px;background:#fff;box-shadow:inset 1px 1px #a0a0a0,inset 2px 2px #696969,inset -1px -1px #fff,inset -2px -2px #e3e3e3;"></div>
<div class="t" style="left:989px;top:220.84px;font-size:12px;line-height:12px;font-family:'Liberation Sans', sans-serif;color:#00e000;transform:scaleX(0.9362);transform-origin:0 0;">8801</div>
<div class="a" style="left:865px;top:248px;width:280px;height:112px;border:1px solid #a0a0a0;box-shadow:inset 1px 1px #fff,1px 1px #fff;"></div>
<div class="a" style="left:871px;top:247px;width:89px;height:3px;background:#f0f0f0"></div>
<div class="t" style="left:873px;top:243.57px;font-size:11px;line-height:11px;font-family:'Liberation Mono', monospace;color:#000;transform:scaleX(0.9089);transform-origin:0 0;-webkit-text-stroke:0.2px #000;">remote control</div>
<div class="t" style="left:874px;top:266.57px;font-size:11px;line-height:11px;font-family:'Liberation Mono', monospace;color:#000;transform:scaleX(0.9088);transform-origin:0 0;-webkit-text-stroke:0.2px #000;">Throttle:</div>
<div class="a" style="left:952px;top:264px;width:142px;height:3px;background:#8c8c8c;box-shadow:inset 0 -1px #fff;"></div>
<div class="a" style="left:941px;top:256px;width:11px;height:22px;background:#f0f0f0;box-shadow:inset 1px 1px #fff,inset -1px -1px #696969,inset -2px -2px #a0a0a0;"></div>
<div class="t" style="left:1103px;top:267.57px;font-size:11px;line-height:11px;font-family:'Liberation Mono', monospace;color:#000;transform:scaleX(0.8584);transform-origin:0 0;-webkit-text-stroke:0.2px #000;">0.50 V</div>
<div class="a" style="left:871px;top:292px;width:179px;height:29px;border:1px solid #a0a0a0;box-shadow:inset 1px 1px #fff,1px 1px #fff;"></div>
<div class="a" style="left:877px;top:291px;width:30px;height:3px;background:#f0f0f0"></div>
<div class="t" style="left:880px;top:287.57px;font-size:11px;line-height:11px;font-family:'Liberation Mono', monospace;color:#000;transform:scaleX(0.9089);transform-origin:0 0;-webkit-text-stroke:0.2px #000;">Gear</div>
<svg class="a" style="left:874px;top:303px" width="12" height="12" viewBox="0 0 12 12"><circle cx="6" cy="6" r="5.5" fill="#fff" stroke="#e0e0e0" stroke-width="0.9"/><path d="M2.1 9.9 A5.5 5.5 0 0 1 9.9 2.1" fill="none" stroke="#9a9a9a" stroke-width="0.9"/><path d="M2.75 9.25 A4.6 4.6 0 0 1 9.25 2.75" fill="none" stroke="#6a6a6a" stroke-width="0.9"/><circle cx="6" cy="6" r="2" fill="#000"/></svg>
<div class="t" style="left:891px;top:304.57px;font-size:11px;line-height:11px;font-family:'Liberation Mono', monospace;color:#000;transform:scaleX(0.9078);transform-origin:0 0;-webkit-text-stroke:0.2px #000;">L</div>
<svg class="a" style="left:920px;top:303px" width="12" height="12" viewBox="0 0 12 12"><circle cx="6" cy="6" r="5.5" fill="#fff" stroke="#e0e0e0" stroke-width="0.9"/><path d="M2.1 9.9 A5.5 5.5 0 0 1 9.9 2.1" fill="none" stroke="#9a9a9a" stroke-width="0.9"/><path d="M2.75 9.25 A4.6 4.6 0 0 1 9.25 2.75" fill="none" stroke="#6a6a6a" stroke-width="0.9"/></svg>
<div class="t" style="left:936px;top:304.57px;font-size:11px;line-height:11px;font-family:'Liberation Mono', monospace;color:#000;transform:scaleX(0.9078);transform-origin:0 0;-webkit-text-stroke:0.2px #000;">M</div>
<svg class="a" style="left:968px;top:303px" width="12" height="12" viewBox="0 0 12 12"><circle cx="6" cy="6" r="5.5" fill="#fff" stroke="#e0e0e0" stroke-width="0.9"/><path d="M2.1 9.9 A5.5 5.5 0 0 1 9.9 2.1" fill="none" stroke="#9a9a9a" stroke-width="0.9"/><path d="M2.75 9.25 A4.6 4.6 0 0 1 9.25 2.75" fill="none" stroke="#6a6a6a" stroke-width="0.9"/></svg>
<div class="t" style="left:983px;top:304.57px;font-size:11px;line-height:11px;font-family:'Liberation Mono', monospace;color:#000;transform:scaleX(0.9078);transform-origin:0 0;-webkit-text-stroke:0.2px #000;">H</div>
<svg class="a" style="left:1012px;top:302px" width="12" height="12" viewBox="0 0 12 12"><circle cx="6" cy="6" r="5.5" fill="#fff" stroke="#e0e0e0" stroke-width="0.9"/><path d="M2.1 9.9 A5.5 5.5 0 0 1 9.9 2.1" fill="none" stroke="#9a9a9a" stroke-width="0.9"/><path d="M2.75 9.25 A4.6 4.6 0 0 1 9.25 2.75" fill="none" stroke="#6a6a6a" stroke-width="0.9"/></svg>
<div class="t" style="left:1028px;top:303.57px;font-size:11px;line-height:11px;font-family:'Liberation Mono', monospace;color:#000;transform:scaleX(0.9078);transform-origin:0 0;-webkit-text-stroke:0.2px #000;">S</div>
<div class="a" style="left:1059px;top:302px;width:12px;height:12px;background:#fff;box-shadow:inset 1px 1px #6a6a6a,inset -1px -1px #e3e3e3;"></div>
<div class="t" style="left:1076px;top:303.57px;font-size:11px;line-height:11px;font-family:'Liberation Mono', monospace;color:#000;transform:scaleX(0.9089);transform-origin:0 0;-webkit-text-stroke:0.2px #000;">Switch</div>
<div class="a" style="left:876px;top:333px;width:12px;height:12px;background:#fff;box-shadow:inset 1px 1px #6a6a6a,inset -1px -1px #e3e3e3;"></div>
<div class="t" style="left:893px;top:334.57px;font-size:11px;line-height:11px;font-family:'Liberation Mono', monospace;color:#000;transform:scaleX(0.9087);transform-origin:0 0;-webkit-text-stroke:0.2px #000;">Brake</div>
<div class="a" style="left:928px;top:335px;width:12px;height:12px;background:#fff;box-shadow:inset 1px 1px #6a6a6a,inset -1px -1px #e3e3e3;"></div>
<div class="t" style="left:945px;top:336.57px;font-size:11px;line-height:11px;font-family:'Liberation Mono', monospace;color:#000;transform:scaleX(0.9078);transform-origin:0 0;-webkit-text-stroke:0.2px #000;">R</div>
<div class="a" style="left:976px;top:335px;width:12px;height:12px;background:#fff;box-shadow:inset 1px 1px #6a6a6a,inset -1px -1px #e3e3e3;"></div>
<div class="t" style="left:994px;top:336.57px;font-size:11px;line-height:11px;font-family:'Liberation Mono', monospace;color:#000;transform:scaleX(0.9089);transform-origin:0 0;-webkit-text-stroke:0.2px #000;">Lock</div>
<div class="a" style="left:850px;top:370px;width:313px;height:119px;border:1px solid #a0a0a0;box-shadow:inset 1px 1px #fff,1px 1px #fff;"></div>
<div class="a" style="left:856px;top:369px;width:71px;height:3px;background:#f0f0f0"></div>
<div class="t" style="left:858px;top:365.57px;font-size:11px;line-height:11px;font-family:'Liberation Mono', monospace;color:#000;transform:scaleX(0.9088);transform-origin:0 0;-webkit-text-stroke:0.2px #000;">Calibration</div>
<div class="t" style="left:858px;top:381.57px;font-size:11px;line-height:11px;font-family:'Liberation Mono', monospace;color:#000;transform:scaleX(0.9089);transform-origin:0 0;-webkit-text-stroke:0.2px #000;">vol cal:</div>
<div class="a" style="left:928px;top:379px;width:63px;height:17px;background:#fff;box-shadow:inset 1px 1px #a0a0a0,inset 2px 2px #696969,inset -1px -1px #fff,inset -2px -2px #e3e3e3;"></div>
<div class="t" style="left:930.5px;top:382.69px;font-size:11px;line-height:11px;font-family:'Liberation Sans', sans-serif;color:#000;transform:scaleX(0.9802);transform-origin:0 0;">1456</div>
<div class="a" style="left:974px;top:381px;width:16px;height:7px;background:#f0f0f0;box-shadow:inset 1px 1px #fff,inset -1px -1px #696969,inset -2px -2px #a0a0a0;"></div>
<div class="a" style="left:974px;top:388px;width:16px;height:7px;background:#f0f0f0;box-shadow:inset 1px 1px #fff,inset -1px -1px #696969,inset -2px -2px #a0a0a0;"></div>
<div class="a" style="left:981px;top:384px;width:2px;height:1px;background:#000;"></div>
<div class="a" style="left:981px;top:391px;width:2px;height:1px;background:#000;"></div>
<div class="a" style="left:1009px;top:376px;width:72px;height:23px;background:#f0f0f0;box-shadow:inset 1px 1px #fff,inset -1px -1px #696969,inset -2px -2px #a0a0a0;"></div>
<div class="t" style="left:1024.0px;top:382.57px;font-size:11px;line-height:11px;font-family:'Liberation Mono', monospace;color:#000;transform:scaleX(0.9087);transform-origin:0 0;-webkit-text-stroke:0.2px #000;">CLR DTC</div>
<div class="t" style="left:859px;top:407.57px;font-size:11px;line-height:11px;font-family:'Liberation Mono', monospace;color:#000;transform:scaleX(0.9089);transform-origin:0 0;-webkit-text-stroke:0.2px #000;">cur cal:</div>
<div class="a" style="left:928px;top:404px;width:63px;height:16px;background:#fff;box-shadow:inset 1px 1px #a0a0a0,inset 2px 2px #696969,inset -1px -1px #fff,inset -2px -2px #e3e3e3;"></div>
<div class="t" style="left:930.5px;top:406.69px;font-size:11px;line-height:11px;font-family:'Liberation Sans', sans-serif;color:#000;transform:scaleX(0.9796);transform-origin:0 0;">72</div>
<div class="a" style="left:974px;top:405px;width:16px;height:7px;background:#f0f0f0;box-shadow:inset 1px 1px #fff,inset -1px -1px #696969,inset -2px -2px #a0a0a0;"></div>
<div class="a" style="left:974px;top:412px;width:16px;height:7px;background:#f0f0f0;box-shadow:inset 1px 1px #fff,inset -1px -1px #696969,inset -2px -2px #a0a0a0;"></div>
<div class="a" style="left:981px;top:408px;width:2px;height:1px;background:#000;"></div>
<div class="a" style="left:981px;top:415px;width:2px;height:1px;background:#000;"></div>
<div class="t" style="left:858px;top:431.57px;font-size:11px;line-height:11px;font-family:'Liberation Mono', monospace;color:#000;transform:scaleX(0.9089);transform-origin:0 0;-webkit-text-stroke:0.2px #000;">weak flux:</div>
<div class="a" style="left:928px;top:427px;width:63px;height:17px;background:#fff;box-shadow:inset 1px 1px #a0a0a0,inset 2px 2px #696969,inset -1px -1px #fff,inset -2px -2px #e3e3e3;"></div>
<div class="t" style="left:930.5px;top:430.69px;font-size:11px;line-height:11px;font-family:'Liberation Sans', sans-serif;color:#000;transform:scaleX(0.9796);transform-origin:0 0;">30</div>
<div class="a" style="left:974px;top:429px;width:16px;height:7px;background:#f0f0f0;box-shadow:inset 1px 1px #fff,inset -1px -1px #696969,inset -2px -2px #a0a0a0;"></div>
<div class="a" style="left:974px;top:436px;width:16px;height:7px;background:#f0f0f0;box-shadow:inset 1px 1px #fff,inset -1px -1px #696969,inset -2px -2px #a0a0a0;"></div>
<div class="a" style="left:981px;top:432px;width:2px;height:1px;background:#000;"></div>
<div class="a" style="left:981px;top:439px;width:2px;height:1px;background:#000;"></div>
<div class="a" style="left:850px;top:488px;width:313px;height:106px;border:1px solid #a0a0a0;box-shadow:inset 1px 1px #fff,1px 1px #fff;"></div>
<div class="a" style="left:870px;top:497px;width:75px;height:21px;background:#f0f0f0;box-shadow:inset 1px 1px #fff,inset -1px -1px #696969,inset -2px -2px #a0a0a0;"></div>
<div class="t" style="left:880.5px;top:502.57px;font-size:11px;line-height:11px;font-family:'Liberation Mono', monospace;color:#000;transform:scaleX(0.9088);transform-origin:0 0;-webkit-text-stroke:0.2px #000;">open file</div>
<div class="a" style="left:955px;top:499px;width:182px;height:22px;background:#fff;box-shadow:inset 1px 1px #a0a0a0,inset 2px 2px #696969,inset -1px -1px #fff,inset -2px -2px #e3e3e3;"></div>
<div class="a" style="left:871px;top:524px;width:75px;height:21px;background:#f0f0f0;box-shadow:inset 1px 1px #fff,inset -1px -1px #696969,inset -2px -2px #a0a0a0;"></div>
<div class="t" style="left:884.5px;top:529.57px;font-size:11px;line-height:11px;font-family:'Liberation Mono', monospace;color:#000;transform:scaleX(0.9089);transform-origin:0 0;-webkit-text-stroke:0.2px #000;">download</div>
<div class="a" style="left:960px;top:527px;width:161px;height:21px;box-shadow:inset 1px 1px #a0a0a0,inset -1px -1px #fff;"></div>
<div class="t" style="left:862px;top:557.57px;font-size:11px;line-height:11px;font-family:'Liberation Mono', monospace;color:#000;transform:scaleX(0.9089);transform-origin:0 0;-webkit-text-stroke:0.2px #000;">moden:</div>
<div class="a" style="left:903px;top:554px;width:136px;height:19px;background:#fff;box-shadow:inset 1px 1px #a0a0a0,inset 2px 2px #696969,inset -1px -1px #fff,inset -2px -2px #e3e3e3;"></div>
<div class="t" style="left:906px;top:558.57px;font-size:11px;line-height:11px;font-family:'Liberation Mono', monospace;color:#000;transform:scaleX(0.9089);transform-origin:0 0;-webkit-text-stroke:0.2px #000;">No-ops</div>
<div class="a" style="left:1021px;top:556px;width:16px;height:15px;background:#f0f0f0;box-shadow:inset 1px 1px #fff,inset -1px -1px #696969,inset -2px -2px #a0a0a0;"></div>
<svg class="a" style="left:1024px;top:561px" width="10" height="6"><path d="M1 1 L9 1 L5 5Z" fill="#000"/></svg>
<div class="t" style="left:1048px;top:557.57px;font-size:11px;line-height:11px;font-family:'Liberation Mono', monospace;color:#000;transform:scaleX(0.9089);transform-origin:0 0;-webkit-text-stroke:0.2px #000;">delay:</div>
<div class="a" style="left:1084px;top:554px;width:50px;height:17px;background:#fff;box-shadow:inset 1px 1px #a0a0a0,inset 2px 2px #696969,inset -1px -1px #fff,inset -2px -2px #e3e3e3;"></div>
<div class="t" style="left:1087px;top:556.84px;font-size:12px;line-height:12px;font-family:'Liberation Sans', sans-serif;color:#000;transform:scaleX(0.9731);transform-origin:0 0;">12</div>
<div class="a" style="left:349px;top:632px;width:1017px;height:136px;background:#fff;box-shadow:0 0 0 1px rgba(10,50,90,0.6), 0 -4px 14px rgba(0,0,0,0.22);"></div>
<svg class="a" style="left:359px;top:638px" width="13" height="16" viewBox="0 0 13 16"><rect x="0.5" y="0.5" width="12" height="15" fill="#fde28a" stroke="#e8c35a"/><rect x="9" y="9" width="3.5" height="6.5" fill="#fce9a8" stroke="#e8c35a" stroke-width="0.8"/></svg>
<div class="a" style="left:380px;top:640px;width:1px;height:12px;background:#808080;"></div>
<svg class="a" style="left:392px;top:639px" width="13" height="16" viewBox="0 0 13 16"><path d="M0.5 0.5 L9 0.5 L12.5 4 L12.5 15.5 L0.5 15.5Z" fill="#fff" stroke="#858585"/><path d="M3 8 L5.5 10.5 L10 5.5" fill="none" stroke="#e8602a" stroke-width="1.5"/></svg>
<svg class="a" style="left:414px;top:639px" width="13" height="16" viewBox="0 0 13 16"><rect x="0.5" y="0.5" width="12" height="15" fill="#fde28a" stroke="#e8c35a"/><rect x="9" y="9" width="3.5" height="6.5" fill="#fce9a8" stroke="#e8c35a" stroke-width="0.8"/></svg>
<svg class="a" style="left:434px;top:644px" width="9" height="8"><rect x="0" y="0" width="9" height="1.2" fill="#000"/><path d="M1 3 L8 3 L4.5 7Z" fill="#000"/></svg>
<div class="a" style="left:450px;top:640px;width:1px;height:12px;background:#808080;"></div>
<div class="a" style="left:608px;top:635px;width:123px;height:27px;background:#ebcdfa;"></div>
<div class="t" style="left:644px;top:642.84px;font-size:12px;line-height:12px;font-family:'Liberation Sans', sans-serif;color:#333;transform:scaleX(0.9487);transform-origin:0 0;">Verwalten</div>
<div class="t" style="left:745px;top:641.84px;font-size:12px;line-height:12px;font-family:'Liberation Sans', sans-serif;color:#888;transform:scaleX(0.9261);transform-origin:0 0;">VOTOL Software</div>
<div class="a" style="left:349px;top:662px;width:56px;height:23px;background:#0063b1;"></div>
<div class="t" style="left:364px;top:667.84px;font-size:12px;line-height:12px;font-family:'Liberation Sans', sans-serif;color:#fff;transform:scaleX(0.9281);transform-origin:0 0;">Datei</div>
<div class="a" style="left:405px;top:662px;width:52px;height:24px;background:#f5f6f7;border:1px solid #dadbdc;border-bottom:none;box-sizing:border-box;"></div>
<div class="t" style="left:419px;top:667.84px;font-size:12px;line-height:12px;font-family:'Liberation Sans', sans-serif;color:#222;transform:scaleX(0.9273);transform-origin:0 0;">Start</div>
<div class="t" style="left:472.6px;top:667.84px;font-size:12px;line-height:12px;font-family:'Liberation Sans', sans-serif;color:#222;transform:scaleX(0.9436);transform-origin:0 0;">Freigeben</div>
<div class="t" style="left:552.8px;top:667.84px;font-size:12px;line-height:12px;font-family:'Liberation Sans', sans-serif;color:#222;transform:scaleX(0.9655);transform-origin:0 0;">Ansicht</div>
<div class="a" style="left:608px;top:662px;width:1px;height:23px;background:#dadbdc;"></div>
<div class="a" style="left:731px;top:662px;width:1px;height:23px;background:#dadbdc;"></div>
<div class="t" style="left:622px;top:667.84px;font-size:12px;line-height:12px;font-family:'Liberation Sans', sans-serif;color:#222;transform:scaleX(0.9975);transform-origin:0 0;">Anwendungstools</div>
<div class="a" style="left:349px;top:685px;width:1017px;height:83px;background:#f5f6f7;border-top:1px solid #dadbdc;box-sizing:border-box;"></div>
<div class="a" style="left:405px;top:685px;width:51px;height:1px;background:#f5f6f7;"></div>
<div class="a" style="left:701px;top:690px;width:1px;height:78px;background:#e2e3e4;"></div>
<div class="a" style="left:828px;top:690px;width:1px;height:78px;background:#e2e3e4;"></div>
<div class="a" style="left:960px;top:690px;width:1px;height:78px;background:#e2e3e4;"></div>
<div class="a" style="left:1134px;top:690px;width:1px;height:78px;background:#e2e3e4;"></div>
<div class="a" style="left:1304px;top:690px;width:1px;height:78px;background:#e2e3e4;"></div>
<svg class="a" style="left:389px;top:697px" width="22" height="24" viewBox="0 0 22 24"><path d="M13 1 L21 9 L18 10 L14 15 L15 19 L13 21 L8 14 L2 22 L1 21 L7 13 L1 8 L3 6 L7 7 L12 3Z" fill="#a8b8d0"/></svg>
<div class="t" style="left:357px;top:728.84px;font-size:12px;line-height:12px;font-family:'Liberation Sans', sans-serif;color:#6d6d6d;transform:scaleX(0.9795);transform-origin:0 0;">An Schnellzugriff</div>
<div class="t" style="left:377px;top:741.84px;font-size:12px;line-height:12px;font-family:'Liberation Sans', sans-serif;color:#6d6d6d;transform:scaleX(0.9996);transform-origin:0 0;">anheften</div>
<svg class="a" style="left:459px;top:694px" width="28" height="30" viewBox="0 0 28 30"><path d="M1 1 L14 1 L18 5 L18 22 L1 22Z" fill="#fff" stroke="#7a8a9a"/><path d="M9 8 L22 8 L26 12 L26 29 L9 29Z" fill="#fff" stroke="#7a8a9a"/><path d="M12 14 H23 M12 17 H23 M12 20 H23 M12 23 H23 M12 26 H23" stroke="#4a8ad8" stroke-width="1"/><path d="M4 6 H14 M4 9 H14 M4 12 H8" stroke="#4a8ad8"/></svg>
<div class="t" style="left:450px;top:728.84px;font-size:12px;line-height:12px;font-family:'Liberation Sans', sans-serif;color:#222;transform:scaleX(0.9470);transform-origin:0 0;">Kopieren</div>
<svg class="a" style="left:513px;top:693px" width="24" height="31" viewBox="0 0 24 31"><rect x="1" y="4" width="22" height="26" fill="#dde8f6" stroke="#8aa0bc"/><rect x="7" y="1" width="10" height="5" fill="#b8c4d0" stroke="#8a9aac"/><path d="M5 11 H19 M5 14 H19 M5 17 H19 M5 20 H19 M5 23 H19" stroke="#a8c0e0"/></svg>
<div class="t" style="left:501px;top:728.84px;font-size:12px;line-height:12px;font-family:'Liberation Sans', sans-serif;color:#6d6d6d;transform:scaleX(0.9710);transform-origin:0 0;">Einfügen</div>
<svg class="a" style="left:556px;top:694px" width="14" height="16" viewBox="0 0 14 16"><path d="M3 1 L8 10 M11 1 L6 10" stroke="#6a7a8a" stroke-width="1.5"/><circle cx="4" cy="12.5" r="2.5" fill="none" stroke="#2a7ad8" stroke-width="1.6"/><circle cx="10" cy="12.5" r="2.5" fill="none" stroke="#2a7ad8" stroke-width="1.6"/></svg>
<div class="t" style="left:573px;top:694.84px;font-size:12px;line-height:12px;font-family:'Liberation Sans', sans-serif;color:#222;transform:scaleX(0.9510);transform-origin:0 0;">Ausschneiden</div>
<svg class="a" style="left:555px;top:718px" width="15" height="10" viewBox="0 0 15 10"><rect x="0.5" y="0.5" width="14" height="9" fill="#cfe3f8" stroke="#6a9ad0"/><path d="M3 3 L4 7 M5 3 L6 7 M8 6 H12" stroke="#234" stroke-width="1"/></svg>
<div class="t" style="left:573px;top:716.84px;font-size:12px;line-height:12px;font-family:'Liberation Sans', sans-serif;color:#222;transform:scaleX(0.9681);transform-origin:0 0;">Pfad kopieren</div>
<svg class="a" style="left:557px;top:738px" width="13" height="15" viewBox="0 0 13 15"><rect x="0.5" y="0.5" width="12" height="14" fill="#e8eef5" stroke="#8aa0bc"/><path d="M4 10 Q4 6 8 6 L8 4 L11 7 L8 10 L8 8 Q6 8 4 10Z" fill="#6a8ab0"/></svg>
<div class="t" style="left:573px;top:738.84px;font-size:12px;line-height:12px;font-family:'Liberation Sans', sans-serif;color:#6d6d6d;transform:scaleX(1.0071);transform-origin:0 0;">Verknüpfung einfügen</div>
<svg class="a" style="left:726px;top:694px" width="30" height="30" viewBox="0 0 30 30"><path d="M4 1 L20 1 L20 28 L4 28Z" fill="#fde28a" stroke="#e8c35a"/><path d="M28 14 L18 14 L18 10 L10 17 L18 24 L18 20 L28 20Z" fill="#2a8ae8"/></svg>
<div class="t" style="left:708px;top:728.84px;font-size:12px;line-height:12px;font-family:'Liberation Sans', sans-serif;color:#222;transform:scaleX(0.9327);transform-origin:0 0;">Verschieben</div>
<div class="t" style="left:722px;top:741.84px;font-size:12px;line-height:12px;font-family:'Liberation Sans', sans-serif;color:#222;transform:scaleX(0.9911);transform-origin:0 0;">nach</div>
<svg class="a" style="left:750px;top:747px" width="6" height="4"><path d="M0 0 L6 0 L3 3Z" fill="#333"/></svg>
<svg class="a" style="left:786px;top:693px" width="28" height="30" viewBox="0 0 28 30"><path d="M1 4 L17 4 L17 29 L1 29Z" fill="#fde28a" stroke="#e8c35a"/><path d="M11 1 L24 1 L27 4 L27 20 L11 20Z" fill="#fff" stroke="#7a8a9a"/><path d="M14 7 H24 M14 10 H24 M14 13 H24 M14 16 H24" stroke="#4a8ad8"/></svg>
<div class="t" style="left:775px;top:728.84px;font-size:12px;line-height:12px;font-family:'Liberation Sans', sans-serif;color:#222;transform:scaleX(0.9491);transform-origin:0 0;">Kopieren</div>
<div class="t" style="left:782px;top:741.84px;font-size:12px;line-height:12px;font-family:'Liberation Sans', sans-serif;color:#222;transform:scaleX(0.9220);transform-origin:0 0;">nach</div>
<svg class="a" style="left:809px;top:747px" width="6" height="4"><path d="M0 0 L6 0 L3 3Z" fill="#333"/></svg>
<svg class="a" style="left:842px;top:695px" width="26" height="27"><path d="M3 3 L23 24 M23 3 L3 24" stroke="#e0141e" stroke-width="3.6"/></svg>
<div class="t" style="left:834px;top:728.84px;font-size:12px;line-height:12px;font-family:'Liberation Sans', sans-serif;color:#222;transform:scaleX(0.9256);transform-origin:0 0;">Löschen</div>
<svg class="a" style="left:852px;top:746px" width="6" height="4"><path d="M0 0 L6 0 L3 3Z" fill="#333"/></svg>
<svg class="a" style="left:901px;top:695px" width="30" height="28" viewBox="0 0 30 28"><rect x="1" y="8" width="27" height="11" fill="#fff" stroke="#8a9aac"/><rect x="4" y="10" width="16" height="7" fill="#2a8ae8"/><path d="M18 1 H26 M22 1 V27 M18 27 H26" stroke="#333" stroke-width="1.5"/></svg>
<div class="t" style="left:881px;top:728.84px;font-size:12px;line-height:12px;font-family:'Liberation Sans', sans-serif;color:#222;transform:scaleX(0.9672);transform-origin:0 0;">Umbenennen</div>
<svg class="a" style="left:975px;top:696px" width="19" height="28" viewBox="0 0 19 28"><path d="M1 3 L9 1 L18 3 L18 27 L1 27Z" fill="#fde28a" stroke="#e8c35a"/><path d="M12 10 L18 8 L18 27 L12 27Z" fill="#f5cf62"/></svg>
<div class="t" style="left:970px;top:728.84px;font-size:12px;line-height:12px;font-family:'Liberation Sans', sans-serif;color:#222;transform:scaleX(0.9484);transform-origin:0 0;">Neuer</div>
<div class="t" style="left:967px;top:741.84px;font-size:12px;line-height:12px;font-family:'Liberation Sans', sans-serif;color:#222;transform:scaleX(1.0118);transform-origin:0 0;">Ordner</div>
<svg class="a" style="left:1009px;top:693px" width="17" height="15" viewBox="0 0 17 15"><rect x="0.5" y="0.5" width="10" height="9" fill="#cfe3f8" stroke="#5a8ac0"/><rect x="5.5" y="4.5" width="11" height="10" fill="#fff" stroke="#7a8a9a"/><path d="M8 8 H14 M8 11 H14" stroke="#4a8ad8"/></svg>
<div class="t" style="left:1029.4px;top:694.84px;font-size:12px;line-height:12px;font-family:'Liberation Sans', sans-serif;color:#222;transform:scaleX(0.9214);transform-origin:0 0;">Neues Element</div>
<svg class="a" style="left:1108px;top:700px" width="6" height="4"><path d="M0 0 L6 0 L3 3Z" fill="#333"/></svg>
<svg class="a" style="left:1009px;top:715px" width="17" height="17" viewBox="0 0 17 17"><path d="M4 0.5 L13 0.5 L16.5 4 L16.5 16.5 L4 16.5Z" fill="#fff" stroke="#555"/><path d="M1 5 H7 M1 8 H7" stroke="#2a6ac0" stroke-width="1.2"/></svg>
<div class="t" style="left:1029.4px;top:716.84px;font-size:12px;line-height:12px;font-family:'Liberation Sans', sans-serif;color:#222;transform:scaleX(0.9678);transform-origin:0 0;">Einfacher Zugriff</div>
<svg class="a" style="left:1118px;top:722px" width="6" height="4"><path d="M0 0 L6 0 L3 3Z" fill="#333"/></svg>
<svg class="a" style="left:1166px;top:695px" width="23" height="29" viewBox="0 0 23 29"><path d="M0.5 0.5 L16 0.5 L22.5 7 L22.5 28.5 L0.5 28.5Z" fill="#fff" stroke="#6a6a6a"/><path d="M5 15 L9 19 L17 10" fill="none" stroke="#e8602a" stroke-width="2.2"/></svg>
<div class="t" style="left:1141px;top:728.34px;font-size:12px;line-height:12px;font-family:'Liberation Sans', sans-serif;color:#222;transform:scaleX(0.9532);transform-origin:0 0;">Eigenschaften</div>
<svg class="a" style="left:1175px;top:746px" width="6" height="4"><path d="M0 0 L6 0 L3 3Z" fill="#333"/></svg>
<svg class="a" style="left:1220px;top:695px" width="16" height="12" viewBox="0 0 16 12"><rect x="0.5" y="0.5" width="15" height="11" fill="#fff" stroke="#555"/><rect x="0.5" y="0.5" width="15" height="2" fill="#555"/><rect x="3" y="4" width="5" height="6" fill="#2a6ac0"/><path d="M10 5 H14 M10 7 H14 M10 9 H14" stroke="#555"/></svg>
<div class="t" style="left:1239.3px;top:694.84px;font-size:12px;line-height:12px;font-family:'Liberation Sans', sans-serif;color:#222;transform:scaleX(1.0220);transform-origin:0 0;">Öffnen</div>
<svg class="a" style="left:1281px;top:700px" width="6" height="4"><path d="M0 0 L6 0 L3 3Z" fill="#333"/></svg>
<svg class="a" style="left:1222px;top:714px" width="15" height="19" viewBox="0 0 15 19"><path d="M0.5 0.5 L10 0.5 L14.5 5 L14.5 18.5 L0.5 18.5Z" fill="#f4f6f9" stroke="#a8b8cc"/><path d="M4 15 L12 5" stroke="#9ab0cc" stroke-width="2"/></svg>
<div class="t" style="left:1239.3px;top:716.84px;font-size:12px;line-height:12px;font-family:'Liberation Sans', sans-serif;color:#8a8a8a;transform:scaleX(0.9406);transform-origin:0 0;">Bearbeiten</div>
<svg class="a" style="left:1220px;top:736px" width="17" height="17" viewBox="0 0 17 17"><rect x="0.5" y="0.5" width="10" height="12" fill="#fde28a" stroke="#e8c35a"/><circle cx="11" cy="11" r="5.5" fill="#fff" stroke="#555"/><path d="M11 8 V11 H13" stroke="#555"/><path d="M3 11 Q3 16 8 16" stroke="#2a9a3a" stroke-width="2" fill="none"/></svg>
<div class="t" style="left:1239.3px;top:738.84px;font-size:12px;line-height:12px;font-family:'Liberation Sans', sans-serif;color:#222;transform:scaleX(0.9368);transform-origin:0 0;">Verlauf</div>
<svg class="a" style="left:1312px;top:693px" width="17" height="18" viewBox="0 0 17 18"><rect x="0.5" y="0.5" width="16" height="17" fill="#fff" stroke="#2a7ad8"/><rect x="2" y="2" width="6" height="6.5" fill="#4a9ae8"/><rect x="9" y="2" width="6" height="6.5" fill="#4a9ae8"/><rect x="2" y="9.5" width="6" height="6.5" fill="#4a9ae8"/><rect x="9" y="9.5" width="6" height="6.5" fill="#4a9ae8"/></svg>
<div class="t" style="left:1331px;top:694.84px;font-size:12px;line-height:12px;font-family:'Liberation Sans', sans-serif;color:#222;">Alles auswählen</div>
<svg class="a" style="left:1312px;top:715px" width="17" height="18" viewBox="0 0 17 18"><rect x="1.5" y="1.5" width="5" height="6" fill="none" stroke="#999"/><rect x="10.5" y="1.5" width="5" height="6" fill="none" stroke="#999"/><rect x="1.5" y="10.5" width="5" height="6" fill="none" stroke="#999"/><rect x="10.5" y="10.5" width="5" height="6" fill="none" stroke="#999"/></svg>
<div class="t" style="left:1331px;top:716.84px;font-size:12px;line-height:12px;font-family:'Liberation Sans', sans-serif;color:#222;transform:scaleX(0.9447);transform-origin:0 0;">Nichts</div>
<svg class="a" style="left:1312px;top:737px" width="17" height="18" viewBox="0 0 17 18"><rect x="0.5" y="0.5" width="16" height="17" fill="#fff" stroke="#2a7ad8"/><rect x="2" y="2" width="6" height="6.5" fill="#4a9ae8"/><rect x="9.5" y="2.5" width="5" height="5.5" fill="none" stroke="#999"/><rect x="2.5" y="10" width="5" height="5.5" fill="none" stroke="#999"/><rect x="9" y="9.5" width="6" height="6.5" fill="#4a9ae8"/></svg>
<div class="t" style="left:1331px;top:738.84px;font-size:12px;line-height:12px;font-family:'Liberation Sans', sans-serif;color:#222;">Auswahl umkehren</div>
<div class="t" style="left:485px;top:762.84px;font-size:12px;line-height:12px;font-family:'Liberation Sans', sans-serif;color:#555;">Zwischenablage</div>
<div class="t" style="left:795px;top:762.84px;font-size:12px;line-height:12px;font-family:'Liberation Sans', sans-serif;color:#555;">Organisieren</div>
<div class="t" style="left:1035px;top:762.84px;font-size:12px;line-height:12px;font-family:'Liberation Sans', sans-serif;color:#555;">Neu</div>
<div class="t" style="left:1197px;top:762.84px;font-size:12px;line-height:12px;font-family:'Liberation Sans', sans-serif;color:#555;">Öffnen</div>
<div class="t" style="left:1315px;top:762.84px;font-size:12px;line-height:12px;font-family:'Liberation Sans', sans-serif;color:#555;">Auswählen</div>
<div class="a" style="left:0px;top:766px;width:1366px;height:2px;background:#24323a;"></div>
<div class="a" style="left:48px;top:766px;width:288px;height:2px;background:#f0f0f0;"></div>
<div class="a" style="left:630px;top:766px;width:50px;height:2px;background:#5a6a72;"></div>
</body></html>
